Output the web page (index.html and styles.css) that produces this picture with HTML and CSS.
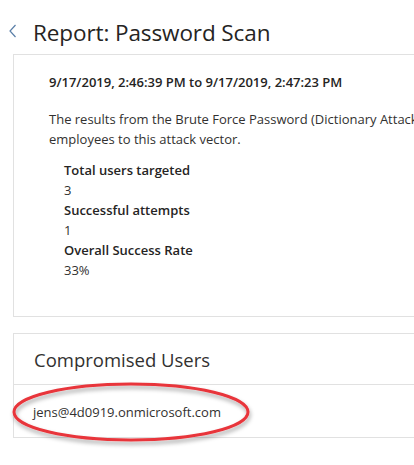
FILE: index.html
```html
<!DOCTYPE html>
<html>
<head>
<meta charset="utf-8">
<link rel="stylesheet" href="styles.css">
</head>
<body>
<div class="page">
  <header class="top">
    <svg class="back" width="10" height="14" viewBox="0 0 10 14"><path d="M7.5 1 L2 7 L7.5 13" fill="none" stroke="#5a7fa8" stroke-width="1.2"/></svg>
    <h1 class="title">Report: Password Scan</h1>
  </header>
  <section class="card summary">
    <div class="range">9/17/2019, 2:46:39 PM to 9/17/2019, 2:47:23 PM</div>
    <p class="desc">The results from the Brute Force Password (Dictionary Attack) simulation show how susceptible your<br>employees to this attack vector.</p>
    <dl class="stats">
      <dt>Total users targeted</dt><dd>3</dd>
      <dt>Successful attempts</dt><dd>1</dd>
      <dt>Overall Success Rate</dt><dd>33%</dd>
    </dl>
  </section>
  <section class="card users">
    <h2 class="users-head">Compromised Users</h2>
    <div class="user-row">jens@4d0919.onmicrosoft.com</div>
    <svg class="circle" width="250" height="70" viewBox="0 0 250 70">
      <defs><filter id="sh" x="-10%" y="-30%" width="120%" height="160%"><feDropShadow dx="1" dy="3" stdDeviation="2" flood-color="#000" flood-opacity="0.35"/></filter></defs>
      <ellipse cx="125" cy="32" rx="117" ry="28" fill="none" stroke="#e8343a" stroke-width="3" filter="url(#sh)"/>
    </svg>
  </section>
</div>
</body>
</html>
```
FILE: styles.css
```css
html, body {
  margin: 0;
  padding: 0;
  background: #fff;
  overflow: hidden;
}
body {
  font-family: "Open Sans", "Noto Sans", sans-serif;
  color: #323130;
  width: 414px;
  height: 465px;
}
.page {
  display: flex;
  flex-direction: column;
  padding-top: 14px;
}
.top {
  display: flex;
  align-items: center;
  gap: 15px;
  padding-left: 8px;
  height: 36px;
}
.back {
  flex: none;
  margin-top: -3px;
}
.title {
  margin: 0;
  font-size: 22.5px;
  font-weight: 400;
  color: #252423;
  letter-spacing: -0.1px;
  white-space: nowrap;
}
.card {
  margin-left: 13px;
  width: 460px;
  border: 1px solid #e1e1e1;
  box-sizing: border-box;
  position: relative;
}
.summary {
  margin-top: 4px;
  height: 263px;
  padding: 17px 0 0 35px;
}
.range {
  font-size: 13px;
  font-weight: 600;
  color: #252423;
  white-space: nowrap;
  line-height: 20px;
}
.desc {
  margin: 17px 0 0;
  font-size: 13px;
  line-height: 20px;
  white-space: nowrap;
  color: #323130;
}
.stats {
  margin: 11px 0 0 15px;
  font-size: 13px;
  line-height: 20px;
}
.stats dt {
  font-weight: 600;
  color: #252423;
}
.stats dd {
  margin: 0;
  color: #323130;
}
.users {
  margin-top: 16px;
  height: 105px;
}
.users-head {
  margin: 0;
  height: 51px;
  box-sizing: border-box;
  border-bottom: 1px solid #e1e1e1;
  padding: 14px 0 0 20px;
  font-size: 18.5px;
  font-weight: 400;
  color: #323130;
  line-height: 24px;
}
.user-row {
  padding: 17px 0 0 19px;
  font-size: 13px;
  line-height: 20px;
  color: #323130;
}
.circle {
  position: absolute;
  left: -8px;
  top: 46px;
}
```
